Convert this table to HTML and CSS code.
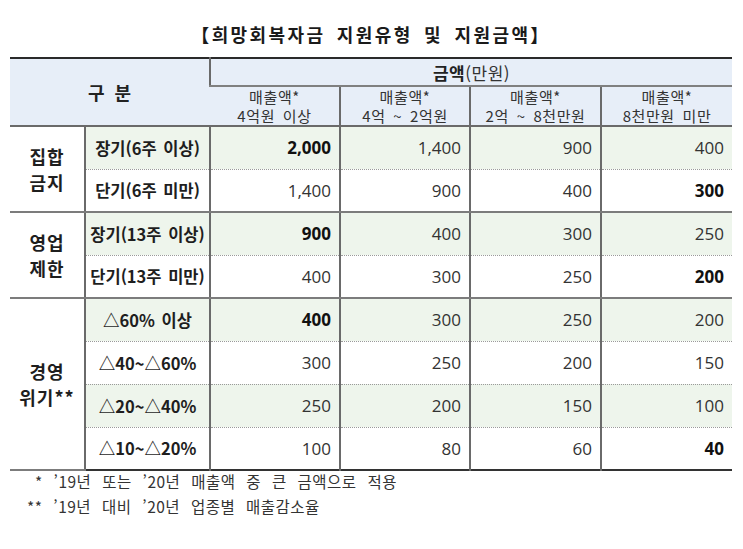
FILE: index.html
```html
<!DOCTYPE html>
<html lang="ko">
<head>
<meta charset="utf-8">
<link rel="stylesheet" href="styles.css">
</head>
<body>
<div class="page">
  <h1 class="title">【희망회복자금 지원유형 및 지원금액】</h1>
  <table class="grid">
    <colgroup>
      <col class="c-group"><col class="c-label"><col class="c-num"><col class="c-num"><col class="c-num2"><col class="c-num2">
    </colgroup>
    <thead>
      <tr class="h1">
        <th rowspan="2" colspan="2" class="gubun">구 분</th>
        <th colspan="4" class="amount"><b>금액</b><span class="unit">(만원)</span></th>
      </tr>
      <tr class="h2">
        <th class="sub">매출액*<br>4억원 이상</th>
        <th class="sub">매출액*<br>4억 ~ 2억원</th>
        <th class="sub">매출액*<br>2억 ~ 8천만원</th>
        <th class="sub">매출액*<br>8천만원 미만</th>
      </tr>
    </thead>
    <tbody>
      <tr class="green">
        <td rowspan="2" class="group">집합<br>금지</td>
        <td class="label">장기(6주 이상)</td>
        <td class="num strong">2,000</td><td class="num">1,400</td><td class="num">900</td><td class="num">400</td>
      </tr>
      <tr class="white last">
        <td class="label">단기(6주 미만)</td>
        <td class="num">1,400</td><td class="num">900</td><td class="num">400</td><td class="num strong">300</td>
      </tr>
      <tr class="green">
        <td rowspan="2" class="group">영업<br>제한</td>
        <td class="label">장기(13주 이상)</td>
        <td class="num strong">900</td><td class="num">400</td><td class="num">300</td><td class="num">250</td>
      </tr>
      <tr class="white last">
        <td class="label">단기(13주 미만)</td>
        <td class="num">400</td><td class="num">300</td><td class="num">250</td><td class="num strong">200</td>
      </tr>
      <tr class="green">
        <td rowspan="4" class="group">경영<br>위기**</td>
        <td class="label">△60% 이상</td>
        <td class="num strong">400</td><td class="num">300</td><td class="num">250</td><td class="num">200</td>
      </tr>
      <tr class="white">
        <td class="label">△40~△60%</td>
        <td class="num">300</td><td class="num">250</td><td class="num">200</td><td class="num">150</td>
      </tr>
      <tr class="green">
        <td class="label">△20~△40%</td>
        <td class="num">250</td><td class="num">200</td><td class="num">150</td><td class="num">100</td>
      </tr>
      <tr class="white">
        <td class="label">△10~△20%</td>
        <td class="num">100</td><td class="num">80</td><td class="num">60</td><td class="num strong">40</td>
      </tr>
    </tbody>
  </table>
  <p class="note note1">* ’19년 또는 ’20년 매출액 중 큰 금액으로 적용</p>
  <p class="note">** ’19년 대비 ’20년 업종별 매출감소율</p>
</div>
</body>
</html>
```
FILE: styles.css
```css
html, body {
  margin: 0;
  padding: 0;
  background: #ffffff;
}
body {
  font-family: "Noto Sans CJK KR", "Open Sans", sans-serif;
  color: #222;
}
.page {
  padding: 21px 11px 0 10px;
}
.title {
  margin: 0 0 10px 0;
  font-size: 18px;
  line-height: 26px;
  font-weight: 700;
  text-align: center;
  letter-spacing: 2.4px;
  word-spacing: 4px;
  color: #1a1a1a;
}
.grid {
  width: 722px;
  table-layout: fixed;
  border-collapse: collapse;
  border-top: 2px solid #2a2a2a;
  border-bottom: 2px solid #333;
}
.c-group { width: 75px; }
.c-label { width: 125px; }
.c-num { width: 130px; }
.c-num2 { width: 131px; }
th, td {
  padding: 0;
  border-left: 2px solid #6a6a6a;
}
th:first-child, td.group {
  border-left: none;
}
thead th {
  background: #e7eef8;
  font-weight: 400;
  color: #333;
}
.h1 { height: 28px; }
.h2 { height: 39px; }
.gubun {
  font-weight: 700;
  font-size: 18px;
  color: #222;
  word-spacing: 5px;
  border-bottom: 2px solid #6a6a6a;
}
.amount {
  font-size: 17px;
  border-bottom: 2px solid #808080;
  color: #222;
  letter-spacing: 0.5px;
}
.amount b { font-weight: 700; }
.unit { color: #333; }
.sub {
  font-size: 15px;
  line-height: 19px;
  letter-spacing: 0.6px;
  word-spacing: 3px;
  border-bottom: 2px solid #6a6a6a;
  vertical-align: middle;
}
tbody tr { height: 43px; }
tbody tr.last td { border-bottom: 2px solid #7c7c7c; }
tbody tr.green + tr td:not(.group),
tbody tr.white:not(.last) + tr td:not(.group) {
  border-top: 1px dotted #9a9a9a;
}
tr.green td { background: #eef5ec; }
tr.white td { background: #ffffff; }
td.group {
  background: #ffffff !important;
  text-align: center;
  font-weight: 700;
  font-size: 18px;
  line-height: 26px;
  color: #1e1e1e;
  letter-spacing: 1px;
  border-bottom: 2px solid #7c7c7c;
}
td.label {
  text-align: center;
  font-weight: 700;
  font-size: 16.5px;
  color: #1e1e1e;
  letter-spacing: 0;
  word-spacing: 2px;
  white-space: nowrap;
}
td.num {
  text-align: right;
  padding-right: 8px;
  font-family: "Open Sans", "Noto Sans CJK KR", sans-serif;
  font-size: 17px;
  color: #333;
}
td.num.strong {
  font-weight: 700;
  color: #111;
}
.note {
  margin: 0;
  font-size: 15.5px;
  line-height: 25px;
  color: #333;
  letter-spacing: 0.5px;
  word-spacing: 6px;
  padding-left: 17px;
}
.note1 {
  margin-top: -2px;
  padding-left: 25px;
}
```
